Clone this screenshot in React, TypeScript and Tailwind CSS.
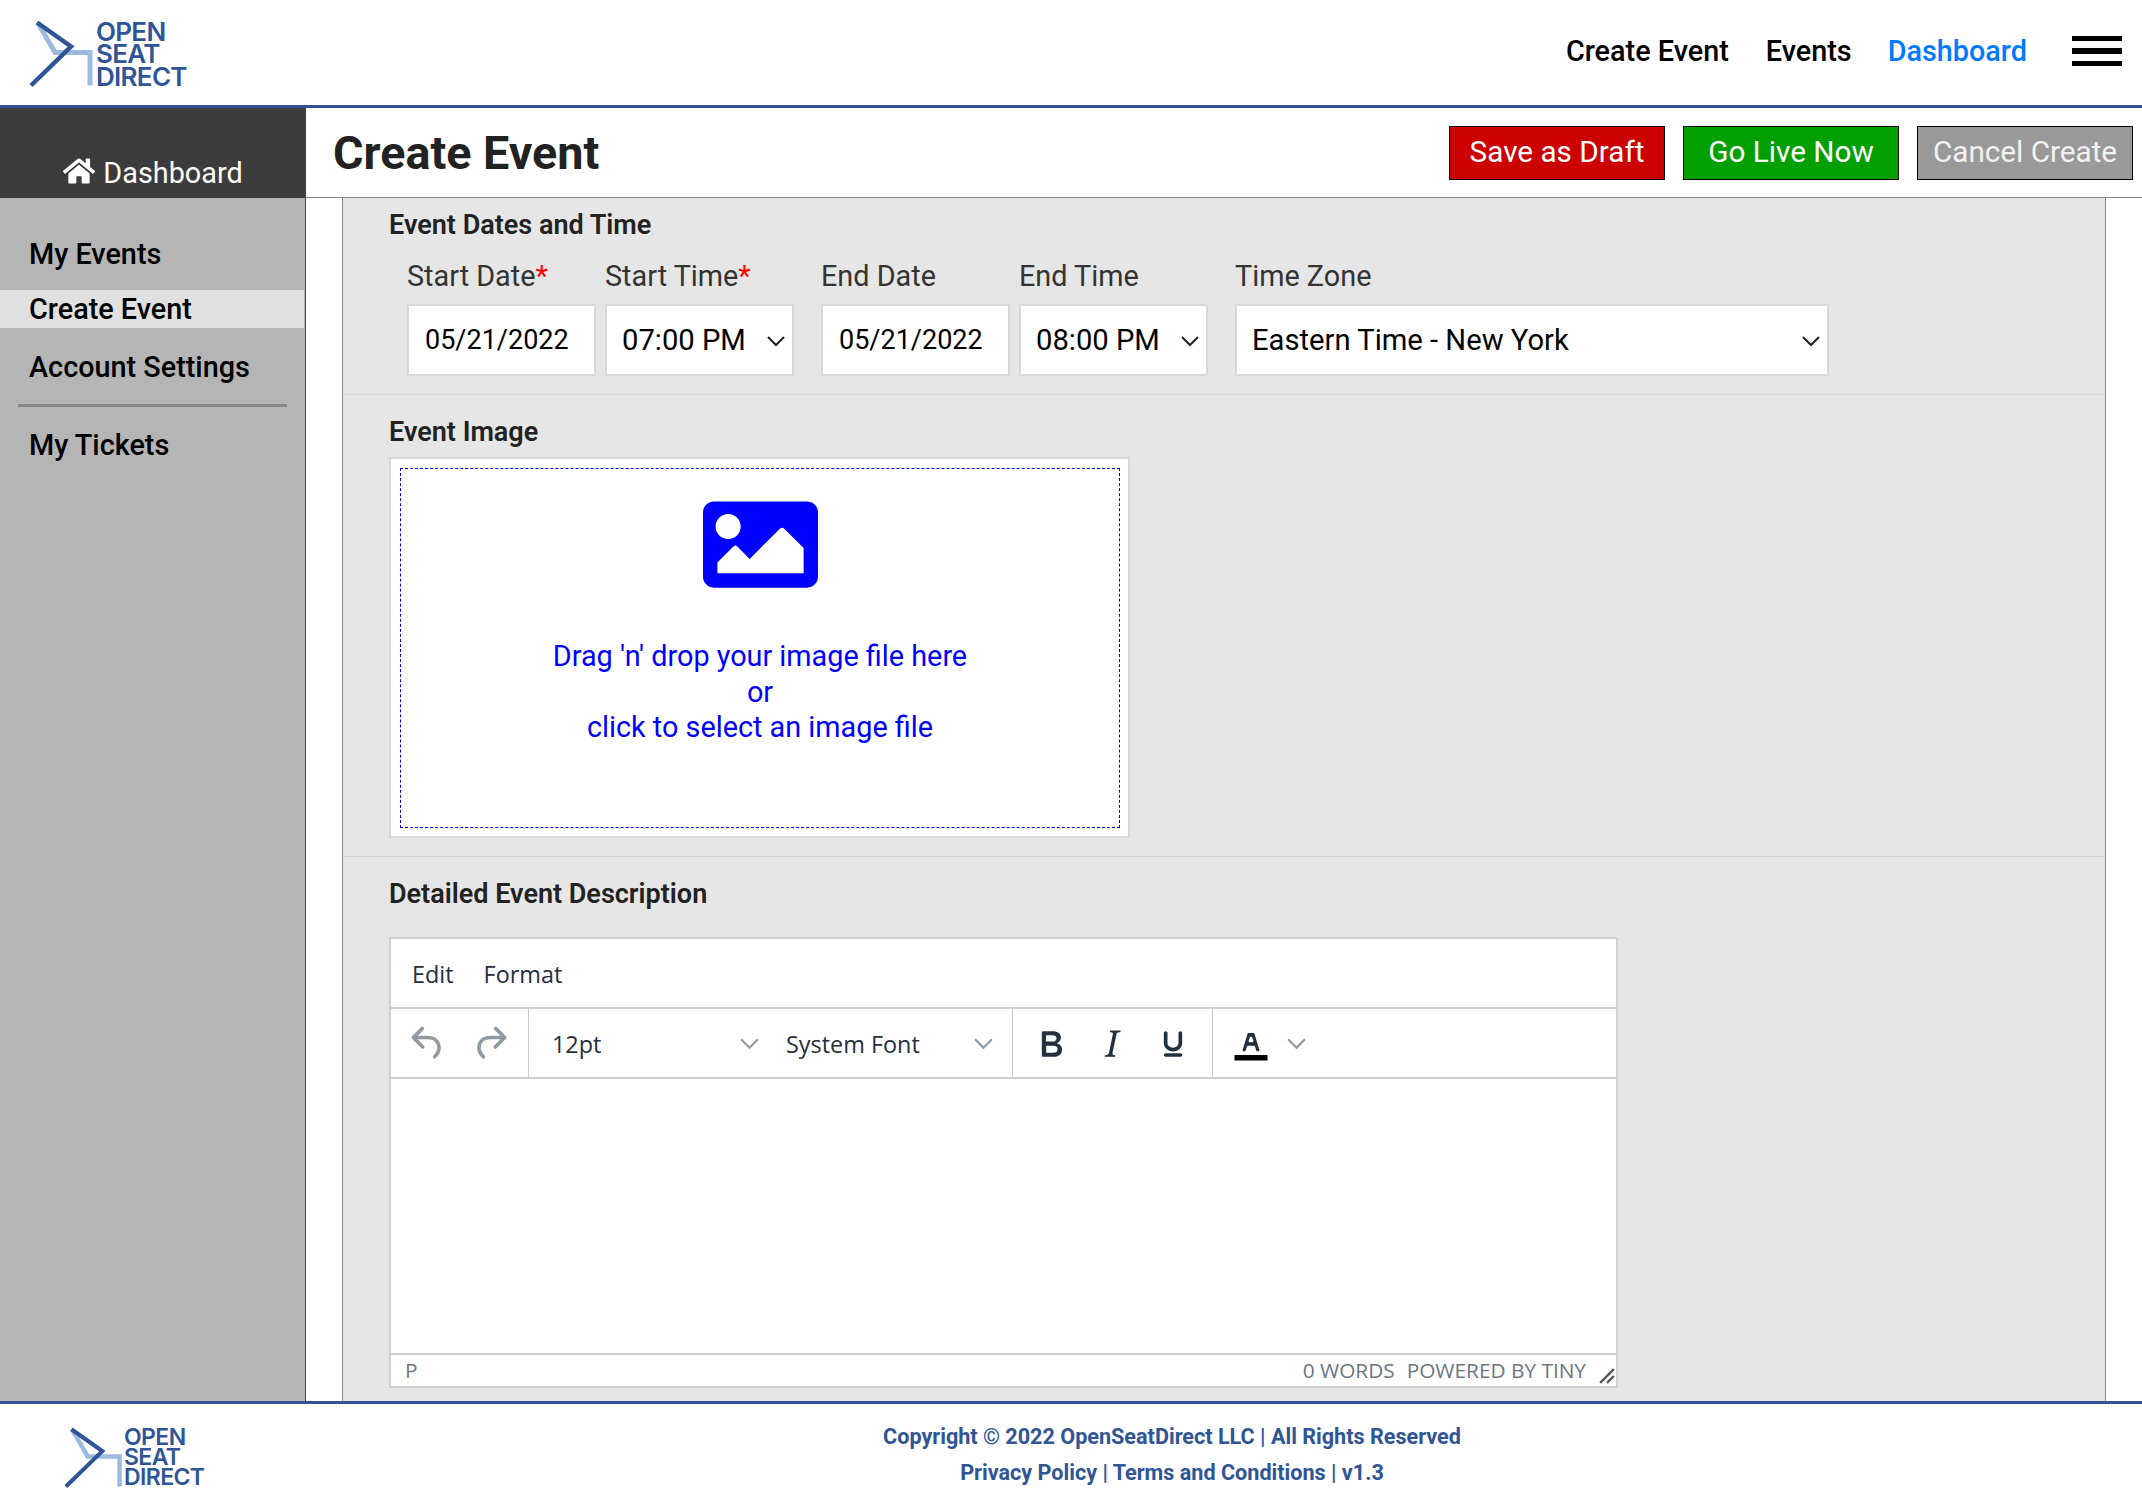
import { FaHome, FaImage } from "react-icons/fa";

const Logo = ({ footer }: { footer?: boolean }) => (
  <div className="flex items-start">
    <svg
      viewBox="0 0 66 66"
      className={
        footer
          ? "w-[60px] h-[60px] shrink-0 overflow-visible"
          : "w-[66px] h-[66px] shrink-0 overflow-visible mt-[3px]"
      }
    >
      <path d="M8 3 L25 32.5 H60 V65.5" fill="none" stroke="#9dbbdf" strokeWidth="5" />
      <path d="M7 2.5 L41 26.5 L1 65.5" fill="none" stroke="#2f5597" strokeWidth="4.5" />
    </svg>
    <div
      className={
        footer
          ? "font-['Inter'] font-semibold text-[#2f5597] text-[23px] leading-[20px] tracking-[-0.6px] -ml-[1px]"
          : "font-['Inter'] font-semibold text-[#2f5597] text-[26px] leading-[22.5px] tracking-[-0.7px] mt-[4px]"
      }
    >
      <div>OPEN</div>
      <div>SEAT</div>
      <div>DIRECT</div>
    </div>
  </div>
);

const Chevron = ({ className }: { className: string }) => (
  <svg viewBox="0 0 20 12" className={className} fill="none" stroke="currentColor">
    <path d="M2 2 L10 10 L18 2" strokeWidth="2" />
  </svg>
);

const Field = ({
  label,
  required,
  value,
  width,
  select,
}: {
  label: string;
  required?: boolean;
  value: string;
  width: string;
  select?: boolean;
}) => (
  <div className={width}>
    <div className="leading-[41px] text-[#333] mb-[7px] whitespace-nowrap">
      {label}
      {required && <span className="text-[#ff0000]">*</span>}
    </div>
    <div
      className={
        select
          ? "h-[72px] bg-white border-2 border-[#d9d9d9] pl-[15px] pr-[6px] pt-[2px] flex items-center justify-between text-black whitespace-nowrap text-[29.2px]"
          : "h-[72px] bg-white border-2 border-[#d9d9d9] pl-[16px] pr-[8px] flex items-center justify-between text-black whitespace-nowrap text-[27px]"
      }
    >
      <span>{value}</span>
      {select && <Chevron className="w-[20px] h-[12px] text-[#222]" />}
    </div>
  </div>
);

const TinyIcon = ({ d, className }: { d: string; className: string }) => (
  <svg viewBox="0 0 24 24" className={className} fill="currentColor">
    <path d={d} />
  </svg>
);

const undoPath =
  "M6.4 8H12c3.7 0 6.2 2 6.8 5.1.6 2.7-.4 5.2-2.6 7.2a1 1 0 0 1-1.4-1.4c1.8-1.7 2.6-3.6 2.1-5.4C16.4 11.5 14.8 10 12 10H6.4l3.3 3.3a1 1 0 1 1-1.4 1.4l-5-5a1 1 0 0 1 0-1.4l5-5a1 1 0 0 1 1.4 1.4L6.4 8z";
const boldPath =
  "M7.8 19c-.3 0-.5 0-.6-.2l-.2-.5V5.7c0-.2 0-.4.2-.5l.6-.2h5c1.5 0 2.7.3 3.5 1 .7.6 1.1 1.4 1.1 2.5a3 3 0 0 1-.6 1.9c-.4.6-1 1-1.6 1.2.4.1.9.3 1.3.6s.8.7 1 1.2c.4.4.5 1 .5 1.6 0 1.3-.4 2.3-1.3 3-.8.7-2.1 1-3.8 1H7.8zm5-8.3c.6 0 1.2-.1 1.6-.5.4-.3.6-.7.6-1.3 0-1.1-.8-1.7-2.4-1.7H9.3v3.5h3.4zm.5 6c.7 0 1.3-.1 1.7-.4.4-.4.6-.9.6-1.5s-.2-1-.7-1.4c-.4-.3-1-.4-2-.4H9.4v3.8h4z";
const italicPath =
  "M16.7 4.7l-.1.9h-.3c-.6 0-1 0-1.4.3-.3.3-.4.6-.5 1.1l-2.1 9.8v.6c0 .5.4.8 1.4.8h.2l-.2.8H8l.2-.8h.2c1.1 0 1.8-.5 2-1.5l2-9.8.1-.5c0-.6-.4-.8-1.4-.8h-.3l.2-.9h5.8z";
const underlinePath =
  "M16 5c.6 0 1 .4 1 1v5.5a4 4 0 0 1-.4 1.8l-1 1.4a5.3 5.3 0 0 1-5.5 1 5 5 0 0 1-1.6-1c-.5-.4-.8-.9-1.1-1.4a4 4 0 0 1-.4-1.8V6c0-.6.4-1 1-1s1 .4 1 1v5.5c0 .3 0 .6.2 1l.6.7a3.3 3.3 0 0 0 2.2.8 3.4 3.4 0 0 0 2.2-.8c.3-.2.4-.5.6-.8l.2-.9V6c0-.6.4-1 1-1zM8 17h8c.6 0 1 .4 1 1s-.4 1-1 1H8a1 1 0 0 1 0-2z";
const colorPath =
  "M8.7 16h-.8a.5.5 0 0 1-.5-.6l2.7-9c.1-.3.3-.4.5-.4h2.8c.2 0 .4.1.5.4l2.7 9a.5.5 0 0 1-.5.6h-.8a.5.5 0 0 1-.4-.4l-.7-2.2c0-.3-.3-.4-.5-.4h-3.4c-.2 0-.4.1-.5.4l-.7 2.2c0 .3-.2.4-.4.4zm2.6-7.6l-.6 2a.5.5 0 0 0 .5.6h1.6a.5.5 0 0 0 .5-.6l-.6-2c0-.3-.3-.4-.5-.4h-.4c-.2 0-.4.1-.5.4z";

const App = () => {
  return (
    <div className="w-[2142px] h-[1502px] flex flex-col overflow-hidden bg-white font-['Roboto',sans-serif] text-[28.8px]">
      {/* top nav */}
      <header className="h-[108px] shrink-0 border-b-[3px] border-[#2f5597] flex items-center justify-between pl-[30px] pr-[20px]">
        <Logo />
        <div className="flex items-center font-medium -mt-[3px]">
          <span className="text-black mt-[1px]">Create Event</span>
          <span className="text-black ml-[37px] mt-[1px]">Events</span>
          <span className="text-[#007bff] ml-[36px] mt-[1px]">Dashboard</span>
          <div className="ml-[45px] w-[50px] flex flex-col gap-[7px]">
            <div className="h-[5px] bg-black" />
            <div className="h-[6px] bg-black" />
            <div className="h-[5px] bg-black" />
          </div>
        </div>
      </header>

      <div className="flex-1 flex min-h-0">
        {/* sidebar */}
        <aside className="w-[306px] shrink-0 bg-[#b5b5b5] border-r border-[#444]">
          <div className="h-[90px] bg-[#3c3c3c] text-white flex items-end justify-center pb-[4px] leading-[41px] pl-[1px]">
            <FaHome className="w-[32px] h-[32px] mr-[8px] mb-[7px]" />
            <span>Dashboard</span>
          </div>
          <nav className="font-medium text-black pt-[36px]">
            <div className="pl-[29px] leading-[41px]">My Events</div>
            <div className="pl-[29px] h-[38px] leading-[39px] mt-[15px] bg-[#e0e0e0] mr-[1px]">Create Event</div>
            <div className="pl-[29px] leading-[41px] mt-[19px]">Account Settings</div>
            <div className="mx-[18px] h-[3px] bg-[#888] mt-[16px]" />
            <div className="pl-[29px] leading-[41px] mt-[18px]">My Tickets</div>
          </nav>
        </aside>

        <main className="flex-1 min-w-0 flex flex-col">
          <div className="h-[90px] shrink-0 border-b border-[#888] flex items-center justify-between pl-[27px] pr-[9px]">
            <h1 className="text-[46.7px] font-bold text-[#222] mt-[1px]">Create Event</h1>
            <div className="flex gap-[18px] text-[29.7px]">
              <button className="w-[216px] h-[54px] bg-[#cc0000] text-white border border-black">Save as Draft</button>
              <button className="w-[216px] h-[54px] bg-[#00a000] text-white border border-black">Go Live Now</button>
              <button className="w-[216px] h-[54px] bg-[#999999] text-[#f2f2f2] border border-black">Cancel Create</button>
            </div>
          </div>

          <div className="flex-1 min-h-0 ml-[36px] mr-[36px] bg-[#e6e6e6] border-x border-[#888] overflow-hidden">
            {/* dates */}
            <section className="border-b border-[#d5d5d5] pl-[46px] pt-[7px] pb-[18px]">
              <h2 className="font-semibold text-[27px] text-[#222] leading-[41px] mb-[10px]">Event Dates and Time</h2>
              <div className="flex pl-[18px]">
                <Field label="Start Date" required value="05/21/2022" width="w-[189px]" />
                <div className="w-[9px]" />
                <Field label="Start Time" required value="07:00 PM" width="w-[189px]" select />
                <div className="w-[27px]" />
                <Field label="End Date" value="05/21/2022" width="w-[189px]" />
                <div className="w-[9px]" />
                <Field label="End Time" value="08:00 PM" width="w-[189px]" select />
                <div className="w-[27px]" />
                <Field label="Time Zone" value="Eastern Time - New York" width="w-[594px]" select />
              </div>
            </section>

            {/* image */}
            <section className="border-b border-[#d5d5d5] pl-[46px] pt-[17px] pb-[18px]">
              <h2 className="font-semibold text-[27px] text-[#222] leading-[41px] mb-[4px]">Event Image</h2>
              <div className="w-[741px] h-[381px] bg-white border-2 border-[#d9d9d9] pl-[9px] pr-[8px] pt-[9px] pb-[8px]">
                <div className="h-full border border-dashed border-[#0000ff] flex flex-col items-center text-[#0000ff] leading-[35.5px] pt-[18px]">
                  <FaImage className="w-[115px] h-[115px]" />
                  <div className="mt-[37px] text-center">
                    <div>Drag 'n' drop your image file here</div>
                    <div>or</div>
                    <div>click to select an image file</div>
                  </div>
                </div>
              </div>
            </section>

            {/* description */}
            <section className="pl-[46px] pt-[17px]">
              <h2 className="font-semibold text-[27px] text-[#222] leading-[41px] mb-[22px]">Detailed Event Description</h2>
              <div className="w-[1229px] h-[451px] bg-white border-2 border-[#d0d0d0] flex flex-col font-['Open_Sans',sans-serif] text-[23.4px] text-[#222f3e]">
                <div className="h-[70px] shrink-0 border-b-2 border-[#d0d0d0] flex items-center pl-[21px] pt-[3px] gap-[30px]">
                  <span>Edit</span>
                  <span>Format</span>
                </div>
                <div className="h-[70px] shrink-0 border-b-2 border-[#d0d0d0] flex">
                  <div className="w-[138px] shrink-0 border-r border-[#ccc] flex items-center text-[#8f9aa3] pl-[15px] gap-[18px]">
                    <TinyIcon d={undoPath} className="w-[44px] h-[44px]" />
                    <TinyIcon d={undoPath} className="w-[44px] h-[44px] -scale-x-100" />
                  </div>
                  <div className="w-[484px] shrink-0 border-r border-[#ccc] flex items-center pt-[3px]">
                    <span className="ml-[23px] w-[187px]">12pt</span>
                    <Chevron className="w-[21px] h-[13px] text-[#8f9aa3] -mt-[3px]" />
                    <span className="ml-[26px] w-[187px] whitespace-nowrap">System Font</span>
                    <Chevron className="w-[21px] h-[13px] text-[#8f9aa3] -mt-[3px]" />
                  </div>
                  <div className="w-[200px] shrink-0 border-r border-[#ccc] flex items-center pl-[16px] gap-[17px] pt-[1px]">
                    <TinyIcon d={boldPath} className="w-[44px] h-[44px]" />
                    <TinyIcon d={italicPath} className="w-[44px] h-[44px]" />
                    <TinyIcon d={underlinePath} className="w-[44px] h-[44px]" />
                  </div>
                  <div className="flex items-center pl-[16px] pt-[1px]">
                    <svg viewBox="0 0 24 24" className="w-[44px] h-[44px]" fill="currentColor">
                      <path d={colorPath} />
                      <rect x="3" y="18" width="18" height="3" fill="#000" />
                    </svg>
                    <Chevron className="w-[21px] h-[13px] text-[#8f9aa3] ml-[13px]" />
                  </div>
                </div>
                <div className="flex-1" />
                <div className="h-[33px] shrink-0 border-t-2 border-[#d0d0d0] flex items-center text-[20.8px] text-[#6b7785] pl-[14px] pt-[1px]">
                  <span>P</span>
                  <span className="ml-auto">0 WORDS</span>
                  <span className="ml-[12px]">POWERED BY TINY</span>
                  <svg viewBox="0 0 14 14" className="w-[16px] h-[16px] ml-[13px] mr-[1px] mt-[10px]" stroke="#555" strokeWidth="2">
                    <path d="M1 13 L13 1 M7 13 L13 7" />
                  </svg>
                </div>
              </div>
            </section>
          </div>
        </main>
      </div>

      {/* footer */}
      <footer className="h-[101px] shrink-0 border-t-[3px] border-[#2f5597] relative flex">
        <div className="absolute left-[65px] top-[23px]">
          <Logo footer />
        </div>
        <div className="flex-1 text-center font-bold text-[#2f5597] text-[21.6px] leading-[36px] pt-[15px] pl-[202px]">
          <div>Copyright © 2022 OpenSeatDirect LLC | All Rights Reserved</div>
          <div>Privacy Policy | Terms and Conditions | v1.3</div>
        </div>
      </footer>
    </div>
  );
};

export default App;
